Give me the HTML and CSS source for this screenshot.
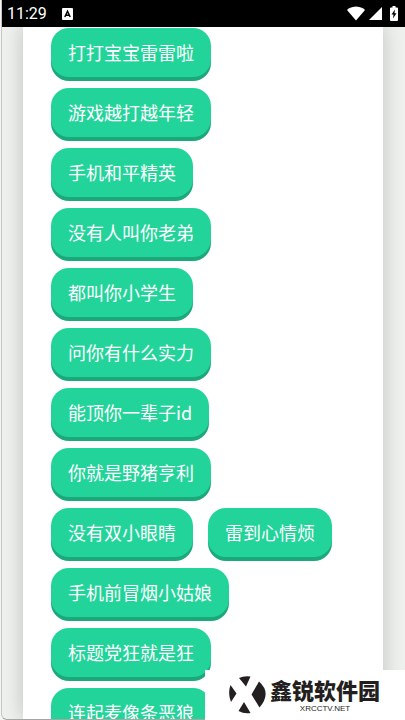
FILE: index.html
```html
<!DOCTYPE html>
<html lang="zh-CN">
<head>
  <meta charset="UTF-8" />
  <meta name="viewport" content="width=device-width, initial-scale=1.0"/>
  <title>打打宝宝雷雷啦</title>
  <link rel="stylesheet" href="styles.css">
</head>
<body>
  <div class="phone">
    <header class="status-bar">
      <span class="time">11:29</span>
      <svg class="app-icon" width="11" height="12" viewBox="0 0 11 12">
        <rect width="11" height="12" rx="1" fill="#fff"/>
        <path d="M2.8 9 L5.5 3.2 L8.2 9 M3.8 7.2 H7.2" fill="none" stroke="#000" stroke-width="1.5"/>
      </svg>
      <div class="status-icons">
        <svg width="18" height="15" viewBox="0 0 18 15">
          <path d="M0 4 Q2 1 9 0.5 Q16 1 18 4 L9 14.5 Z" fill="#fff"/>
        </svg>
        <svg width="13" height="13" viewBox="0 0 13 13">
          <path d="M13 0 V13 H0 Z" fill="#fff"/>
        </svg>
        <svg class="battery" width="8" height="15" viewBox="0 0 8 15">
          <path d="M2.5 0 H5.5 V1.5 H7 Q8 1.5 8 2.5 V14 Q8 15 7 15 H1 Q0 15 0 14 V2.5 Q0 1.5 1 1.5 H2.5 Z" fill="#fff"/>
          <path d="M5 3.5 L1.5 8.5 H3.5 L3 12.5 L6.5 7.3 H4.5 Z" fill="#000"/>
        </svg>
      </div>
    </header>

    <main class="page">
      <div class="sounds">
        <button>打打宝宝雷雷啦</button>
        <button>游戏越打越年轻</button>
        <button>手机和平精英</button>
        <button>没有人叫你老弟</button>
        <button>都叫你小学生</button>
        <button>问你有什么实力</button>
        <button>能顶你一辈子id</button>
        <button>你就是野猪亨利</button>
        <button>没有双小眼睛</button>
        <button>雷到心情烦</button>
        <button>手机前冒烟小姑娘</button>
        <button>标题党狂就是狂</button>
        <button>连起麦像条恶狼</button>
      </div>
    </main>
  </div>

  <div class="watermark">
    <svg width="38" height="38" viewBox="0 0 38 38" fill="#231f20">
      <path d="M10 2 Q15 -0.5 21.5 0.5 L17 10.5 Z"/>
      <path d="M1.5 9 L7.5 17.5 L2 26 Q-1.5 17.5 1.5 9 Z"/>
      <path d="M15 26 L21.5 37 Q15 38 9.5 35 Z"/>
      <path d="M30 5.5 Q43 17 30.5 31.5 L22.5 18.5 Z"/>
    </svg>
    <div class="watermark-text">
      <span class="site-name">鑫锐软件园</span>
      <span class="site-url">XRCCTV.NET</span>
    </div>
  </div>
</body>
</html>
```
FILE: styles.css
```css
* {
  margin: 0;
  padding: 0;
  box-sizing: border-box;
}

html, body {
  height: 100%;
  background: #f4f5f4;
  overflow: hidden;
  font-family: Roboto, "Noto Sans CJK SC", sans-serif;
}

.phone {
  display: flex;
  flex-direction: column;
  height: 100vh;
  margin-left: 1px;
  border-left: 1px solid #c4c5c4;
  border-bottom: 1px solid #a5a7a5;
  border-bottom-left-radius: 6px;
  background: #eff1ee;
  overflow: hidden;
}

.status-bar {
  display: flex;
  align-items: center;
  flex: none;
  height: 27px;
  padding: 0 7px 0 5px;
  background: #000;
  color: #fff;
}

.time {
  font-size: 16px;
  line-height: 27px;
}

.app-icon {
  margin-left: 15px;
}

.status-icons {
  display: flex;
  align-items: center;
  gap: 4px;
  margin-left: auto;
}

.battery {
  margin-left: 4px;
}

.page {
  flex: 1;
  min-height: 0;
  margin: 0 22px 0 21px;
  padding: 1px 28px 0;
  background: #fff;
  box-shadow: 0 0 20px rgba(0, 0, 0, 0.2);
  clip-path: inset(0 -22px);
}

.sounds {
  display: flex;
  flex-wrap: wrap;
  gap: 11px 15px;
}

.sounds button {
  height: 49px;
  padding: 0 17px;
  border: none;
  border-radius: 18px;
  background: #23d49a;
  box-shadow: 0 4px #1ba87b;
  color: #fff;
  font-family: "Noto Sans CJK SC", sans-serif;
  font-size: 18px;
  line-height: 49px;
  white-space: nowrap;
  cursor: pointer;
}

.watermark {
  position: fixed;
  right: 0;
  bottom: 0;
  display: flex;
  align-items: center;
  gap: 3px;
  width: 200px;
  height: 50px;
  padding-left: 24px;
  background: #fff;
  color: #231f20;
}

.watermark-text {
  display: flex;
  flex-direction: column;
  align-items: center;
}

.site-name {
  font-family: "Noto Sans CJK SC", sans-serif;
  font-size: 22px;
  font-weight: 900;
  line-height: 28px;
}

.site-url {
  font-family: "Liberation Sans", sans-serif;
  font-size: 8px;
  line-height: 12px;
}
```
